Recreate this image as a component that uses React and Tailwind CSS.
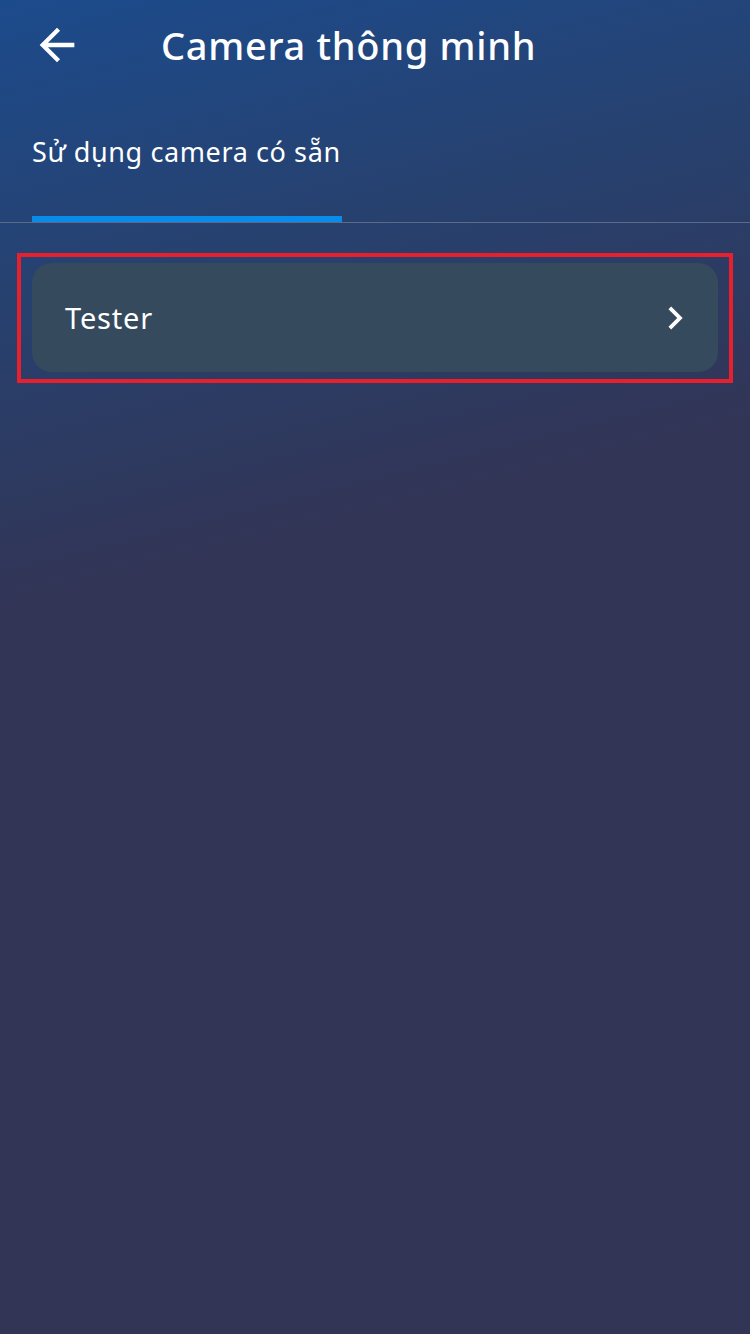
const BackArrow = () => (
  <svg viewBox="0 0 24 24" className="w-[52px] h-[52px]" fill="white">
    <path d="M20 11H7.83l5.59-5.59L12 4l-8 8 8 8 1.41-1.41L7.83 13H20v-2z" />
  </svg>
);

const Chevron = () => (
  <svg viewBox="0 0 24 24" className="w-[46px] h-[46px]" fill="white">
    <path d="M10 6L8.59 7.41 13.17 12l-4.58 4.59L10 18l6-6z" />
  </svg>
);

const App = () => {
  const cameras = ["Tester"];

  return (
    <div
      className="min-h-[1334px] w-full text-white
                 bg-[linear-gradient(166deg,#1c4b8c_0%,#27416f_20%,#323556_40%,#323556_100%)]"
      style={{ fontFamily: '"Noto Sans", "Open Sans", sans-serif' }}
    >
      {/* Header */}
      <div className="h-[90px] flex items-center pl-[31px]">
        <button className="shrink-0">
          <BackArrow />
        </button>
        <h1 className="ml-[78px] text-[38px] leading-none font-medium tracking-[0.7px]">
          Camera thông minh
        </h1>
      </div>

      {/* Tabs */}
      <div className="h-[133px] border-b border-[#5a6a8b] px-[32px]">
        <div className="w-[310px] flex flex-col">
          <span className="mt-[44px] h-[36px] leading-[36px] text-[27px] tracking-[0.6px] whitespace-nowrap">
            Sử dụng camera có sẵn
          </span>
          <div className="mt-[46px] h-[6px] bg-[#0a8be9] relative"></div>
        </div>
      </div>

      {/* List */}
      <div className="mt-[30px] mx-[17px] border-4 border-[#e81f2c] px-[11px] pt-[6px] pb-[7px]">
        {cameras.map((name) => (
          <div
            key={name}
            className="h-[109px] rounded-[20px] bg-[#364a5e] flex items-center justify-between pl-[33px] pr-[20px]"
          >
            <span className="text-[29px] tracking-[0.8px]">{name}</span>
            <Chevron />
          </div>
        ))}
      </div>
    </div>
  );
};

export default App;
